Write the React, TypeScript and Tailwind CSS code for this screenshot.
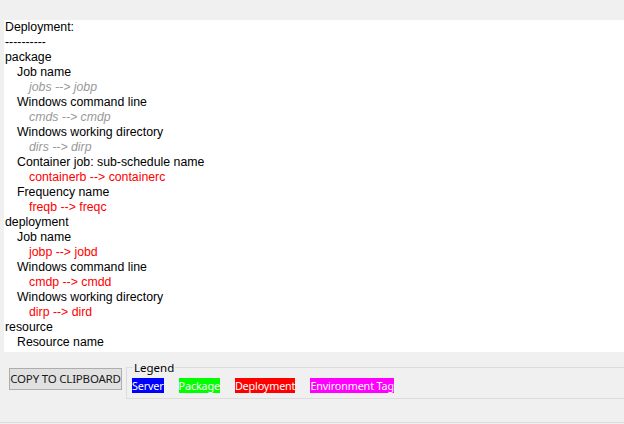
import { FC } from 'react';

type Line = { text: string; level: number; tone?: 'gray' | 'red' };

const lines: Line[] = [
    { text: 'Deployment:', level: 0 },
    { text: '----------', level: 0 },
    { text: 'package', level: 0 },
    { text: 'Job name', level: 1 },
    { text: 'jobs --> jobp', level: 2, tone: 'gray' },
    { text: 'Windows command line', level: 1 },
    { text: 'cmds --> cmdp', level: 2, tone: 'gray' },
    { text: 'Windows working directory', level: 1 },
    { text: 'dirs --> dirp', level: 2, tone: 'gray' },
    { text: 'Container job: sub-schedule name', level: 1 },
    { text: 'containerb --> containerc', level: 2, tone: 'red' },
    { text: 'Frequency name', level: 1 },
    { text: 'freqb --> freqc', level: 2, tone: 'red' },
    { text: 'deployment', level: 0 },
    { text: 'Job name', level: 1 },
    { text: 'jobp --> jobd', level: 2, tone: 'red' },
    { text: 'Windows command line', level: 1 },
    { text: 'cmdp --> cmdd', level: 2, tone: 'red' },
    { text: 'Windows working directory', level: 1 },
    { text: 'dirp --> dird', level: 2, tone: 'red' },
    { text: 'resource', level: 0 },
    { text: 'Resource name', level: 1 },
];

const indent = ['pl-0', 'pl-[12px]', 'pl-[24px]'];

const legendItems = [
    { label: 'Server', className: 'bg-[#0000ff]' },
    { label: 'Package', className: 'bg-[#00ff00]' },
    { label: 'Deployment', className: 'bg-[#ff0000]' },
    { label: 'Environment Tag', className: 'bg-[#ff00ff]' },
];

const ReportLine: FC<{ line: Line }> = ({ line }) => {
    const tone =
        line.tone === 'gray'
            ? 'text-[#999999] italic'
            : line.tone === 'red'
                ? 'text-[#ff0000]'
                : 'text-black';
    return (
        <div className={`h-[15px] whitespace-pre ${indent[line.level]} ${tone}`}>
            {line.text}
        </div>
    );
};

export default function App() {
    return (
        <div className="w-[624px] h-[424px] overflow-hidden bg-[#f0f0f0] flex flex-col">
            <div className="h-[20px] shrink-0" />
            <div
                className="ml-[4px] h-[332px] shrink-0 bg-white pl-[1px] text-[12.3px] leading-[15px]"
                style={{ fontFamily: '"Liberation Sans", Arial, sans-serif' }}
            >
                {lines.map((line, i) => (
                    <ReportLine key={i} line={line} />
                ))}
            </div>
            <div
                className="h-[70px] shrink-0 flex items-start pl-[9px] pt-[15px] gap-[4px]"
                style={{ fontFamily: '"Noto Sans", "Open Sans", sans-serif' }}
            >
                <button className="mt-[1px] w-[113px] h-[22px] shrink-0 border border-[#adadad] bg-[#e1e1e1] text-[11.5px] text-[#1a1a1a] leading-none tracking-[-0.2px]">
                    COPY TO CLIPBOARD
                </button>
                <fieldset className="w-[520px] h-[32px] shrink-0 border border-[#dcdcdc] relative">
                    <span className="absolute left-[6px] -top-[8px] bg-[#f0f0f0] px-[1px] text-[11.5px] leading-[15px] text-black">
                        Legend
                    </span>
                    <div className="flex gap-[15px] pl-[5px] pt-[10px]">
                        {legendItems.map((item) => (
                            <span
                                key={item.label}
                                className={`h-[15px] leading-[15px] text-[10.8px] text-white tracking-[-0.15px] ${item.className}`}
                            >
                                {item.label}
                            </span>
                        ))}
                    </div>
                </fieldset>
            </div>
            <div className="h-[1px] shrink-0 bg-[#dcdcdc]" />
        </div>
    );
}
